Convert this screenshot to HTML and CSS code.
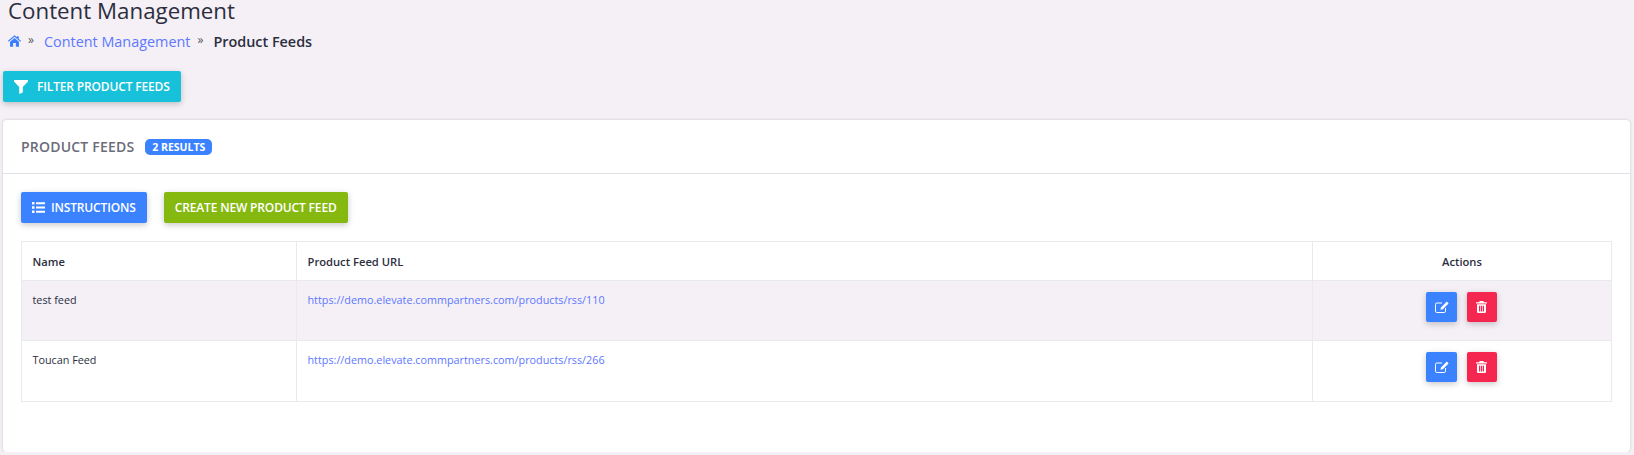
FILE: index.html
```html
<!DOCTYPE html>
<html lang="en">
<head>
  <meta charset="UTF-8" />
  <title>Product Feeds</title>
  <link rel="stylesheet" href="styles.css">
</head>
<body>
  <div class="page-head">
    <h1>Content Management</h1>
    <div class="breadcrumb">
      <a href="#" class="home-link">
        <svg class="home-icon" viewBox="0 0 16 14"><path fill="currentColor" d="M8 0l3 2.500V1h2.200v3.400L16 6.800l-.8 1L8 1.800.8 7.800 0 6.800zM2.500 8L8 3.400 13.500 8v6H9.700V9.500H6.300V14H2.500z"/></svg>
      </a>
      <span class="sep">»</span>
      <a href="#">Content Management</a>
      <span class="sep">»</span>
      <span class="current">Product Feeds</span>
    </div>
  </div>

  <button class="btn btn-filter">
    <svg class="btn-icon" viewBox="0 0 14 14"><path fill="currentColor" d="M0 0h14v1.400L8.800 7v5.600L5.200 14V7L0 1.400z"/></svg>
    Filter Product Feeds
  </button>

  <div class="card">
    <div class="card-header">
      <span class="card-title">Product Feeds</span>
      <span class="badge">2 Results</span>
    </div>
    <div class="card-body">
      <div class="toolbar">
        <button class="btn btn-blue">
          <svg class="list-icon" viewBox="0 0 13 11"><path fill="currentColor" d="M0 0h2.500v2.600H0zM0 4.200h2.500v2.600H0zM0 8.400h2.500V11H0zM4 .3h9v2H4zM4 4.500h9v2H4zM4 8.700h9v2H4z"/></svg>
          Instructions
        </button>
        <button class="btn btn-green">Create New Product Feed</button>
      </div>
      <table class="feeds">
        <thead>
          <tr>
            <th class="col-name">Name</th>
            <th class="col-url">Product Feed URL</th>
            <th class="col-actions">Actions</th>
          </tr>
        </thead>
        <tbody>
          <tr class="shaded">
            <td>test feed</td>
            <td><a href="#">https://demo.elevate.commpartners.com/products/rss/110</a></td>
            <td class="actions">
              <button class="icon-btn btn-blue"><svg class="edit-icon" viewBox="0 0 14 12"><path fill="none" stroke="currentColor" d="M10.500 7v3.200a1.300 1.300 0 0 1-1.300 1.300H1.800a1.300 1.300 0 0 1-1.300-1.300V3.300A1.300 1.300 0 0 1 1.800 2H7"/><path fill="currentColor" d="M11.800.6L13.600 2.400 7.800 8.200 5.400 8.800 6 6.400z"/></svg></button>
              <button class="icon-btn btn-red"><svg class="trash-icon" viewBox="0 0 11 12"><path fill="currentColor" fill-rule="evenodd" d="M3.800 0h3.400l.8 1.200h3V2.500H0V1.200h3zM1 3.300h9V11a1 1 0 0 1-1 1H2a1 1 0 0 1-1-1zM3 4.800v5.700h1.200V4.800zM4.900 4.800v5.700h1.200V4.800zM6.800 4.800v5.700H8V4.800z"/></svg></button>
            </td>
          </tr>
          <tr>
            <td>Toucan Feed</td>
            <td><a href="#">https://demo.elevate.commpartners.com/products/rss/266</a></td>
            <td class="actions">
              <button class="icon-btn btn-blue"><svg class="edit-icon" viewBox="0 0 14 12"><path fill="none" stroke="currentColor" d="M10.500 7v3.200a1.300 1.300 0 0 1-1.300 1.300H1.800a1.300 1.300 0 0 1-1.300-1.300V3.300A1.300 1.300 0 0 1 1.800 2H7"/><path fill="currentColor" d="M11.800.6L13.600 2.400 7.800 8.200 5.400 8.800 6 6.400z"/></svg></button>
              <button class="icon-btn btn-red"><svg class="trash-icon" viewBox="0 0 11 12"><path fill="currentColor" fill-rule="evenodd" d="M3.800 0h3.400l.8 1.200h3V2.500H0V1.200h3zM1 3.300h9V11a1 1 0 0 1-1 1H2a1 1 0 0 1-1-1zM3 4.800v5.700h1.200V4.800zM4.900 4.800v5.700h1.200V4.800zM6.800 4.800v5.700H8V4.800z"/></svg></button>
            </td>
          </tr>
        </tbody>
      </table>
    </div>
  </div>
</body>
</html>
```

FILE: styles.css
```css
body {
  font-family: "Open Sans", "Noto Sans", sans-serif;
  background: #f4f0f6;
  margin: 0;
  padding: 0 4px 0 3px;
  color: #2c2e3e;
}
a {
  color: #5d78ff;
  text-decoration: none;
}
.page-head {
  padding-left: 5px;
}
h1 {
  margin: 0;
  font-size: 22.3px;
  font-weight: 500;
  line-height: 22px;
  color: #2c2e3e;
}
.breadcrumb {
  display: flex;
  align-items: center;
  height: 20px;
  margin-top: 9px;
  font-size: 14.4px;
}
.home-link {
  display: flex;
}
.home-icon {
  width: 13px;
  height: 12px;
  color: #3b7dff;
}
.sep {
  margin: -4px 10px 0 7px;
  font-size: 12px;
  color: #555;
}
.current {
  font-weight: 600;
}
.btn {
  display: flex;
  align-items: center;
  height: 31px;
  padding: 0 11px;
  border: none;
  border-radius: 2px;
  font-family: inherit;
  font-size: 12px;
  font-weight: 600;
  letter-spacing: -0.15px;
  white-space: nowrap;
  text-transform: uppercase;
  color: white;
  box-shadow: 0 2px 6px rgba(0,0,0,0.22);
}
.btn-filter {
  margin-top: 20px;
  background: #17c1da;
}
.btn-icon {
  width: 14px;
  height: 14px;
  margin-right: 9px;
  margin-left: 0;
}
.btn-blue {
  background: #3a82ff;
}
.btn-green {
  background: #86b90f;
}
.btn-red {
  background: #f5264f;
}
.card {
  margin-top: 18px;
  height: 332px;
  background: white;
  border-radius: 4px;
  box-shadow: 0 0 3px rgba(0,0,0,0.18);
}
.card-header {
  display: flex;
  align-items: center;
  height: 53px;
  padding-left: 18px;
  border-bottom: 1px solid #e2e2e6;
}
.card-title {
  font-size: 14px;
  font-weight: 600;
  text-transform: uppercase;
  color: #6a6c7a;
  letter-spacing: 0.2px;
}
.badge {
  margin-left: 11px;
  padding: 0 7px;
  height: 16px;
  line-height: 16px;
  font-size: 10.5px;
  font-weight: 700;
  text-transform: uppercase;
  color: white;
  background: #3a82ff;
  border-radius: 5px;
}
.card-body {
  padding: 18px 18px 0;
}
.toolbar {
  display: flex;
  gap: 17px;
  margin-bottom: 18px;
}
.list-icon {
  width: 13px;
  height: 11px;
  margin-right: 6px;
}
.feeds {
  width: 100%;
  border-collapse: collapse;
  table-layout: fixed;
  font-size: 10.8px;
}
.feeds th, .feeds td {
  box-sizing: border-box;
  border: 1px solid #e9eaee;
  padding: 0 10.5px;
  text-align: left;
}
.feeds th {
  height: 39px;
  font-weight: 600;
  font-size: 11.2px;
}
.feeds td {
  height: 60px;
  padding-top: 11px;
  vertical-align: top;
  line-height: 16px;
}
.feeds tr:last-child td {
  height: 61px;
}
.feeds .col-actions {
  text-align: center;
}
.col-name {
  width: 275px;
}
.col-actions {
  width: 299px;
}
.shaded td {
  background: #f4f0f6;
}
.feeds .actions {
  padding-top: 11px;
  text-align: center;
}
.icon-btn {
  display: inline-flex;
  align-items: center;
  justify-content: center;
  width: 31px;
  height: 30px;
  padding: 0;
  border: none;
  border-radius: 2px;
  color: white;
  box-shadow: 0 2px 6px rgba(0,0,0,0.22);
}
.icon-btn.btn-red {
  width: 30px;
  margin-right: 1px;
}
.icon-btn + .icon-btn {
  margin-left: 7px;
}
.edit-icon {
  width: 14px;
  height: 12px;
}
.trash-icon {
  width: 11px;
  height: 12px;
}
```
